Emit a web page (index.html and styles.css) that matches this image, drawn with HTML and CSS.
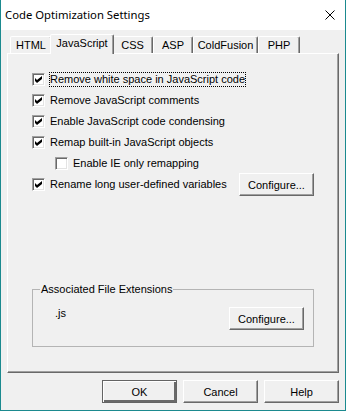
FILE: index.html
```html
<!DOCTYPE html>
<html>
<head>
<meta charset="utf-8">
<link rel="stylesheet" href="styles.css">
</head>
<body>
<div class="window">
  <div class="titlebar">
    <span class="title">Code Optimization Settings</span>
    <svg class="close" width="10" height="10" viewBox="0 0 10 10"><path d="M0.5 0.5 L9.5 9.5 M9.5 0.5 L0.5 9.5" stroke="#000" stroke-width="1" fill="none"/></svg>
  </div>
  <div class="content">
    <div class="tabs">
      <div class="tab w-html">HTML</div>
      <div class="tab w-js selected">JavaScript</div>
      <div class="tab w-css">CSS</div>
      <div class="tab w-asp">ASP</div>
      <div class="tab w-cf">ColdFusion</div>
      <div class="tab w-php">PHP</div>
    </div>
    <div class="panel">
      <div class="options">
        <div class="row"><span class="cb checked"></span><span class="label focus">Remove white space in JavaScript code</span></div>
        <div class="row"><span class="cb checked"></span><span class="label">Remove JavaScript comments</span></div>
        <div class="row"><span class="cb checked"></span><span class="label">Enable JavaScript code condensing</span></div>
        <div class="row"><span class="cb checked"></span><span class="label">Remap built-in JavaScript objects</span></div>
        <div class="row indent"><span class="cb"></span><span class="label">Enable IE only remapping</span></div>
        <div class="row"><span class="cb checked"></span><span class="label">Rename long user-defined variables</span><button class="btn push">Configure...</button></div>
      </div>
      <fieldset class="group">
        <legend>Associated File Extensions</legend>
        <div class="group-body">
          <span class="ext">.js</span>
          <button class="btn">Configure...</button>
        </div>
      </fieldset>
    </div>
    <div class="actions">
      <button class="btn default">OK</button>
      <button class="btn">Cancel</button>
      <button class="btn">Help</button>
    </div>
  </div>
</div>
</body>
</html>
```
FILE: styles.css
```css
* { box-sizing: border-box; }
html, body { margin: 0; padding: 0; }
body {
  width: 346px;
  height: 411px;
  font-family: "Liberation Sans", Arial, sans-serif;
  font-size: 11px;
  color: #000;
  background: #fff;
}
.window {
  width: 346px;
  height: 411px;
  border: 1px solid #1b8a8f;
  border-top: none;
  display: flex;
  flex-direction: column;
  background: #f0f0f0;
}
.titlebar {
  height: 30px;
  flex: none;
  background: #fff;
  display: flex;
  align-items: center;
  justify-content: space-between;
  padding: 0 10px 0 4px;
}
.title {
  font-family: "Noto Sans", sans-serif;
  font-size: 11.3px;
  line-height: 16px;
}
.close { display: block; margin-top: -1px; }
.content {
  flex: 1;
  display: flex;
  flex-direction: column;
  padding: 4px 6px 0;
}
.tabs {
  height: 20px;
  margin-bottom: -1px;
  display: flex;
  align-items: flex-end;
  padding-left: 3px;
  position: relative;
  z-index: 1;
}
.tab {
  height: 17px;
  margin-bottom: 1px;
  border: 1px solid;
  border-bottom: none;
  border-color: #fff #696969 transparent #fff;
  box-shadow: inset -1px 0 #a0a0a0;
  border-radius: 2px 2px 0 0;
  background: #f0f0f0;
  text-align: center;
  line-height: 13px;
  padding-top: 2px;
  white-space: nowrap;
}
.tab.selected {
  height: 20px;
  margin: 0 -2px;
  position: relative;
  z-index: 2;
}
.w-html { width: 42px; }
.w-js { width: 64px; }
.w-css { width: 41px; }
.w-asp { width: 40px; }
.w-cf { width: 65px; }
.w-php { width: 42px; }
.panel {
  height: 320px;
  flex: none;
  border: 1px solid;
  border-color: #fff #696969 #696969 #fff;
  box-shadow: inset -1px -1px #a0a0a0;
  padding: 15px 24px 0;
  display: flex;
  flex-direction: column;
}
.options { display: flex; flex-direction: column; }
.row {
  height: 21px;
  display: flex;
  align-items: center;
  gap: 4px;
}
.row.indent { padding-left: 23px; }
.cb {
  width: 13px;
  height: 13px;
  flex: none;
  border: 1px solid;
  border-color: #a0a0a0 #fff #fff #a0a0a0;
  box-shadow: inset 1px 1px #696969, inset -1px -1px #e3e3e3;
  background: #fff;
  position: relative;
}
.cb.checked::after {
  content: "";
  position: absolute;
  left: 2px;
  top: 2px;
  width: 7px;
  height: 7px;
  background: #000;
  clip-path: polygon(0 28.6%, 28.6% 57.1%, 100% 0, 100% 42.9%, 28.6% 100%, 0 71.4%);
}
.label {
  border: 1px solid transparent;
  line-height: 13px;
  white-space: nowrap;
}
.label.focus { border: 1px dotted #000; }
.btn {
  width: 75px;
  height: 23px;
  flex: none;
  font-family: "Liberation Sans", Arial, sans-serif;
  font-size: 11px;
  color: #000;
  background: #f0f0f0;
  border: 1px solid;
  border-color: #fff #696969 #696969 #fff;
  box-shadow: inset -1px -1px #a0a0a0;
  padding: 0;
  margin: 0;
}
.btn.push { margin-left: auto; }
.btn.default {
  border: 1px solid #646464;
  box-shadow: inset 1px 1px #fff, inset -2px -2px #696969, inset -1px -1px #a0a0a0;
}
.group {
  margin: 88px 0 0;
  padding: 0;
  border: 1px solid #b4b4b4;
  min-width: 0;
}
.group legend {
  margin-left: 7px;
  padding: 0 1px;
  line-height: 13px;
}
.group-body {
  display: flex;
  justify-content: space-between;
  align-items: flex-start;
  padding: 11px 9px 16px 22px;
}
.ext { line-height: 13px; }
.actions {
  display: flex;
  justify-content: flex-end;
  gap: 6px;
  margin-top: 7px;
}
```
